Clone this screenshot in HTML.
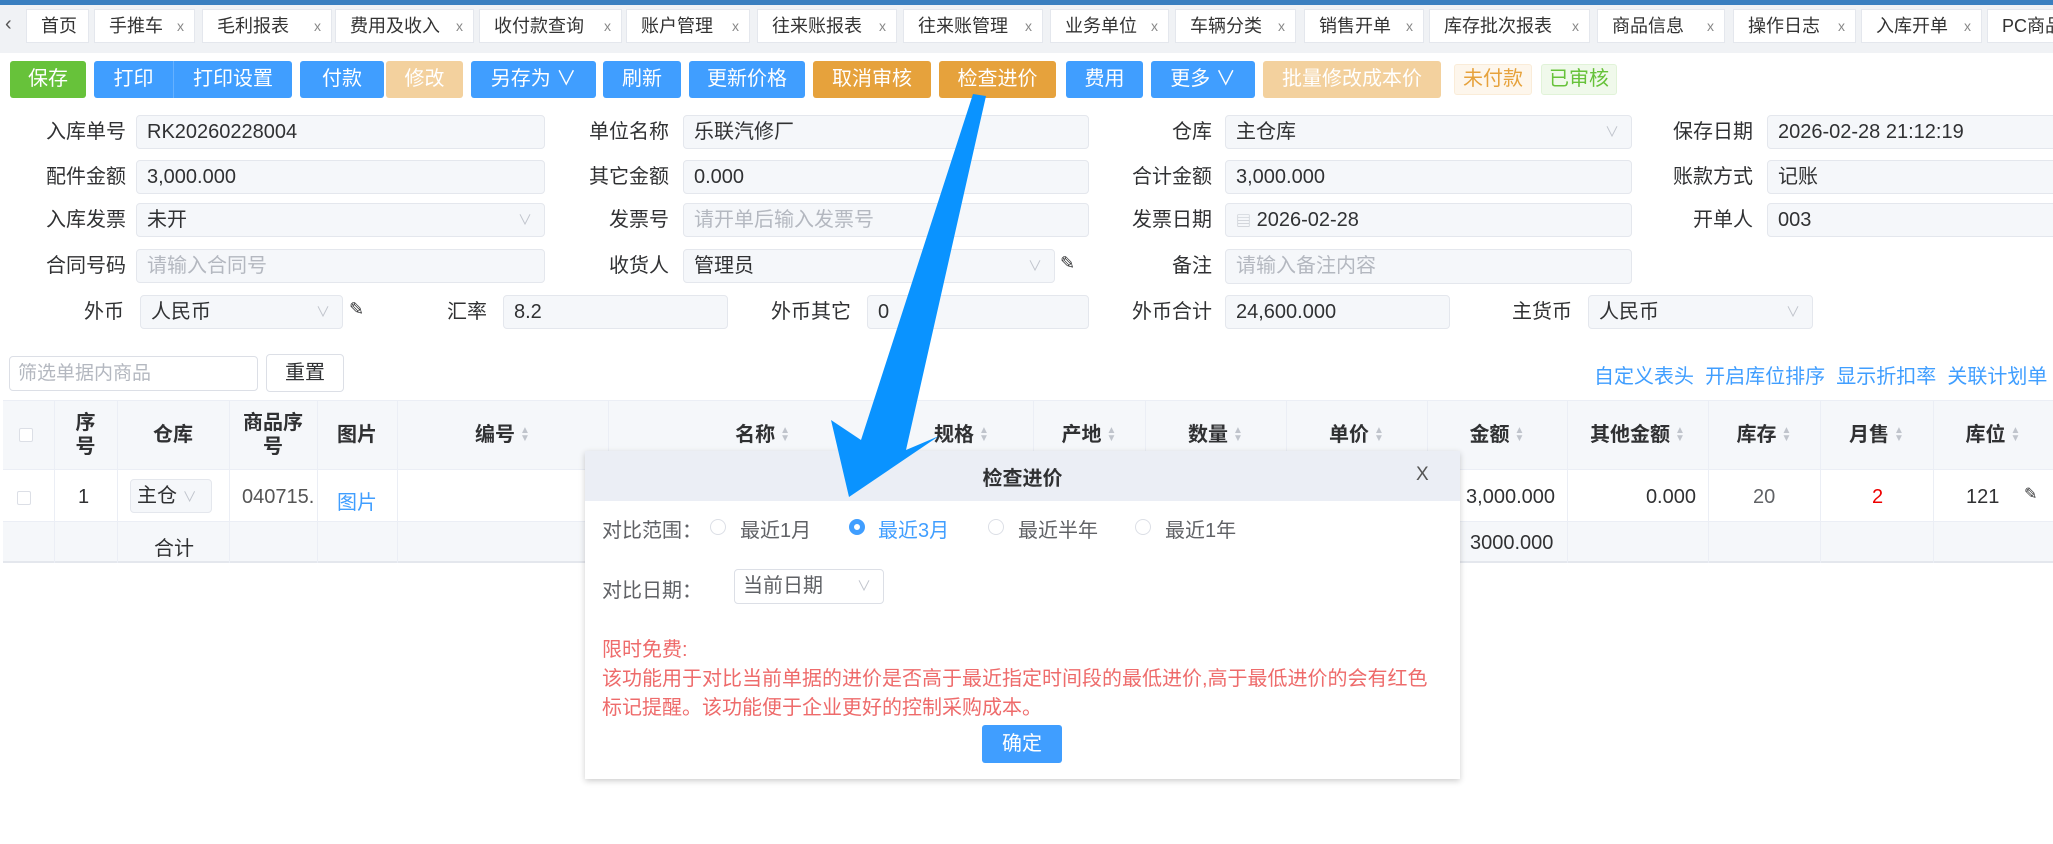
<!DOCTYPE html>
<html><head><meta charset="utf-8"><style>
*{box-sizing:border-box;margin:0;padding:0}
body{width:2053px;height:844px;overflow:hidden;background:#fff;position:relative;font-family:"Liberation Sans","Noto Sans CJK SC",sans-serif;color:#303133;font-size:20px}
.a{position:absolute}
.tab{position:absolute;top:9px;height:34px;background:#fff;border:1px solid #e4e7ed;font-size:18px;line-height:32px;padding-left:14px;color:#333}
.tab i{position:absolute;right:10px;top:0;font-style:normal;font-size:14px;color:#888}
.btn{position:absolute;top:61px;height:37px;border-radius:3px;color:#fff;font-size:20px;line-height:37px;text-align:center}
.bl{background:#409eff}.or{background:#e6a23c}.lo{background:#f3d19e}.gr{background:#67c23a}
.lab{position:absolute;text-align:right;font-size:20px;height:34px;line-height:34px}
.in{position:absolute;height:34px;background:#f5f7fa;border:1px solid #e4e7ed;border-radius:4px;font-size:20px;line-height:32px;padding-left:10px;color:#303133}
.ph{color:#b4b8c0}
.ar{position:absolute;right:12px;top:0;color:#c0c4cc;font-size:14px}
.th{position:absolute;top:400px;height:69px;font-weight:bold;font-size:20px;display:flex;align-items:center;justify-content:center;text-align:center;line-height:24px}
.s{color:#c0c4cc;font-size:10px;line-height:8px;display:inline-block;margin-left:5px;vertical-align:middle}
.vl{position:absolute;top:400px;height:163px;width:1px;background:#ebeef5}
.td{position:absolute;font-size:20px}
.rad{position:absolute;width:16px;height:16px;border:1px solid #dcdfe6;border-radius:50%;top:519px}
</style></head><body>
<div class="a" style="left:0;top:0;width:2053px;height:5px;background:#3a7fc0"></div>
<div class="a" style="left:0;top:5px;width:2053px;height:48px;background:#f0f2f5"></div>
<div class="a" style="left:5px;top:13px;font-size:20px;color:#555">‹</div>
<div class="tab" style="left:26px;width:63px">首页</div>
<div class="tab" style="left:94px;width:101px">手推车<i>x</i></div>
<div class="tab" style="left:202px;width:130px">毛利报表<i>x</i></div>
<div class="tab" style="left:335px;width:139px">费用及收入<i>x</i></div>
<div class="tab" style="left:479px;width:143px">收付款查询<i>x</i></div>
<div class="tab" style="left:626px;width:124px">账户管理<i>x</i></div>
<div class="tab" style="left:757px;width:140px">往来账报表<i>x</i></div>
<div class="tab" style="left:903px;width:140px">往来账管理<i>x</i></div>
<div class="tab" style="left:1050px;width:119px">业务单位<i>x</i></div>
<div class="tab" style="left:1175px;width:121px">车辆分类<i>x</i></div>
<div class="tab" style="left:1304px;width:120px">销售开单<i>x</i></div>
<div class="tab" style="left:1429px;width:161px">库存批次报表<i>x</i></div>
<div class="tab" style="left:1597px;width:128px">商品信息<i>x</i></div>
<div class="tab" style="left:1733px;width:123px">操作日志<i>x</i></div>
<div class="tab" style="left:1861px;width:121px">入库开单<i>x</i></div>
<div class="tab" style="left:1987px;width:80px">PC商品</div>

<div class="btn gr" style="left:10px;width:76px">保存</div>
<div class="btn bl" style="left:94px;width:198px"><span style="position:absolute;left:0;width:79px">打印</span><span style="position:absolute;left:79px;top:0;width:1px;height:37px;background:#66b1ff"></span><span style="position:absolute;left:80px;width:118px">打印设置</span></div>
<div class="btn bl" style="left:300px;width:84px">付款</div>
<div class="btn lo" style="left:386px;width:77px">修改</div>
<div class="btn bl" style="left:471px;width:125px">另存为 ∨</div>
<div class="btn bl" style="left:603px;width:78px">刷新</div>
<div class="btn bl" style="left:689px;width:116px">更新价格</div>
<div class="btn or" style="left:813px;width:118px">取消审核</div>
<div class="btn or" style="left:939px;width:117px">检查进价</div>
<div class="btn bl" style="left:1066px;width:77px">费用</div>
<div class="btn bl" style="left:1151px;width:104px">更多 ∨</div>
<div class="btn lo" style="left:1263px;width:178px">批量修改成本价</div>
<div class="btn" style="left:1454px;top:64px;height:31px;line-height:29px;width:78px;background:#fdf6ec;border:1px solid #faecd8;color:#e6a23c">未付款</div>
<div class="btn" style="left:1541px;top:64px;height:31px;line-height:29px;width:76px;background:#f0f9eb;border:1px solid #e1f3d8;color:#67c23a">已审核</div>

<div class="lab" style="left:20px;width:106px;top:115px">入库单号</div><div class="in" style="left:136px;width:409px;top:115px">RK20260228004</div>
<div class="lab" style="left:560px;width:109px;top:115px">单位名称</div><div class="in" style="left:683px;width:406px;top:115px">乐联汽修厂</div>
<div class="lab" style="left:1100px;width:112px;top:115px">仓库</div><div class="in" style="left:1225px;width:407px;top:115px">主仓库<span class="ar">∨</span></div>
<div class="lab" style="left:1640px;width:113px;top:115px">保存日期</div><div class="in" style="left:1767px;width:300px;top:115px">2026-02-28 21:12:19</div>

<div class="lab" style="left:20px;width:106px;top:160px">配件金额</div><div class="in" style="left:136px;width:409px;top:160px">3,000.000</div>
<div class="lab" style="left:560px;width:109px;top:160px">其它金额</div><div class="in" style="left:683px;width:406px;top:160px">0.000</div>
<div class="lab" style="left:1100px;width:112px;top:160px">合计金额</div><div class="in" style="left:1225px;width:407px;top:160px">3,000.000</div>
<div class="lab" style="left:1640px;width:113px;top:160px">账款方式</div><div class="in" style="left:1767px;width:300px;top:160px">记账</div>

<div class="lab" style="left:20px;width:106px;top:203px">入库发票</div><div class="in" style="left:136px;width:409px;top:203px">未开<span class="ar">∨</span></div>
<div class="lab" style="left:560px;width:109px;top:203px">发票号</div><div class="in ph" style="left:683px;width:406px;top:203px">请开单后输入发票号</div>
<div class="lab" style="left:1100px;width:112px;top:203px">发票日期</div><div class="in" style="left:1225px;width:407px;top:203px"><span style="color:#c0c4cc;font-size:15px">▤</span> 2026-02-28</div>
<div class="lab" style="left:1640px;width:113px;top:203px">开单人</div><div class="in" style="left:1767px;width:300px;top:203px">003</div>

<div class="lab" style="left:20px;width:106px;top:249px">合同号码</div><div class="in ph" style="left:136px;width:409px;top:249px">请输入合同号</div>
<div class="lab" style="left:560px;width:109px;top:249px">收货人</div><div class="in" style="left:683px;width:372px;top:249px">管理员<span class="ar">∨</span></div><div class="a" style="left:1060px;top:253px;font-size:18px">✎</div>
<div class="lab" style="left:1100px;width:112px;top:249px">备注</div><div class="in ph" style="left:1225px;width:407px;top:249px;height:35px">请输入备注内容</div>

<div class="lab" style="left:20px;width:104px;top:295px">外币</div><div class="in" style="left:140px;width:203px;top:295px">人民币<span class="ar">∨</span></div><div class="a" style="left:349px;top:299px;font-size:18px">✎</div>
<div class="lab" style="left:400px;width:87px;top:295px">汇率</div><div class="in" style="left:503px;width:225px;top:295px">8.2</div>
<div class="lab" style="left:740px;width:111px;top:295px">外币其它</div><div class="in" style="left:867px;width:222px;top:295px">0</div>
<div class="lab" style="left:1100px;width:112px;top:295px">外币合计</div><div class="in" style="left:1225px;width:225px;top:295px">24,600.000</div>
<div class="lab" style="left:1460px;width:112px;top:295px">主货币</div><div class="in" style="left:1588px;width:225px;top:295px">人民币<span class="ar">∨</span></div>

<div class="a" style="left:9px;top:356px;width:249px;height:35px;border:1px solid #dcdfe6;border-radius:4px;line-height:33px;padding-left:8px;color:#b4b8c0;font-size:19px">筛选单据内商品</div>
<div class="a" style="left:266px;top:354px;width:78px;height:38px;border:1px solid #dcdfe6;border-radius:4px;line-height:36px;text-align:center;font-size:20px">重置</div>
<div class="a" style="left:1594px;top:360px;color:#409eff;font-size:20px;white-space:nowrap">自定义表头&nbsp; 开启库位排序&nbsp; 显示折扣率&nbsp; 关联计划单</div>

<div class="a" style="left:3px;top:400px;width:2050px;height:69px;background:#f5f7fa;border-top:1px solid #ebeef5"></div>
<div class="a" style="left:3px;top:469px;width:2050px;height:1px;background:#ebeef5"></div>
<div class="a" style="left:3px;top:521px;width:2050px;height:42px;background:#f5f7fa;border-top:1px solid #ebeef5;border-bottom:2px solid #e4e7ed"></div>
<div class="vl" style="left:54px"></div><div class="vl" style="left:117px"></div><div class="vl" style="left:229px"></div><div class="vl" style="left:317px"></div><div class="vl" style="left:397px"></div><div class="vl" style="left:608px"></div><div class="vl" style="left:890px"></div><div class="vl" style="left:1033px"></div><div class="vl" style="left:1145px"></div><div class="vl" style="left:1286px"></div><div class="vl" style="left:1427px"></div><div class="vl" style="left:1567px"></div><div class="vl" style="left:1708px"></div><div class="vl" style="left:1820px"></div><div class="vl" style="left:1933px"></div>
<div class="a" style="left:19px;top:428px;width:14px;height:14px;border:1px solid #dcdfe6;border-radius:2px;background:#fff"></div>
<div class="th" style="left:54px;width:63px">序<br>号</div>
<div class="th" style="left:117px;width:112px">仓库</div>
<div class="th" style="left:229px;width:88px">商品序<br>号</div>
<div class="th" style="left:317px;width:80px">图片</div>
<div class="th" style="left:397px;width:211px">编号<span class="s">▲<br>▼</span></div>
<div class="th" style="left:608px;width:282px;justify-content:flex-end;padding-right:100px">名称<span class="s">▲<br>▼</span></div>
<div class="th" style="left:890px;width:143px">规格<span class="s">▲<br>▼</span></div>
<div class="th" style="left:1033px;width:112px">产地<span class="s">▲<br>▼</span></div>
<div class="th" style="left:1145px;width:141px">数量<span class="s">▲<br>▼</span></div>
<div class="th" style="left:1286px;width:141px">单价<span class="s">▲<br>▼</span></div>
<div class="th" style="left:1427px;width:140px">金额<span class="s">▲<br>▼</span></div>
<div class="th" style="left:1567px;width:141px">其他金额<span class="s">▲<br>▼</span></div>
<div class="th" style="left:1708px;width:112px">库存<span class="s">▲<br>▼</span></div>
<div class="th" style="left:1820px;width:113px">月售<span class="s">▲<br>▼</span></div>
<div class="th" style="left:1933px;width:120px">库位<span class="s">▲<br>▼</span></div>

<div class="a" style="left:17px;top:491px;width:14px;height:14px;border:1px solid #dcdfe6;border-radius:2px"></div>
<div class="td" style="left:78px;top:486px">1</div>
<div class="a" style="left:130px;top:479px;width:82px;height:34px;background:#f5f7fa;border:1px solid #e4e7ed;border-radius:4px;padding-left:6px;line-height:32px;font-size:20px;overflow:hidden;white-space:nowrap">主仓 <span style="color:#c0c4cc;font-size:14px">∨</span></div>
<div class="td" style="left:242px;top:486px;color:#555;width:74px;overflow:hidden;white-space:nowrap">040715.</div>
<div class="td" style="left:337px;top:486px;color:#409eff">图片</div>
<div class="td" style="left:1455px;top:486px;width:100px;text-align:right">3,000.000</div>
<div class="td" style="left:1596px;top:486px;width:100px;text-align:right">0.000</div>
<div class="td" style="left:1753px;top:486px;color:#606266">20</div>
<div class="td" style="left:1872px;top:486px;color:#e00">2</div>
<div class="td" style="left:1966px;top:486px">121</div>
<div class="td" style="left:2024px;top:484px;font-size:16px">✎</div>
<div class="td" style="left:154px;top:532px">合计</div>
<div class="td" style="left:1470px;top:532px">3000.000</div>

<div class="a" style="left:585px;top:451px;width:875px;height:328px;background:#fff;box-shadow:0 2px 6px rgba(0,0,0,.2)"></div>
<div class="a" style="left:585px;top:451px;width:875px;height:50px;background:#ebeef5"></div>
<div class="a" style="left:585px;top:462px;width:875px;text-align:center;font-weight:bold;font-size:20px">检查进价</div>
<div class="a" style="left:1416px;top:464px;font-size:19px;color:#555">X</div>
<div class="a" style="left:602px;top:514px;color:#606266">对比范围：</div>
<div class="rad" style="left:710px"></div><div class="a" style="left:740px;top:514px;color:#606266">最近1月</div>
<div class="rad" style="left:849px;border:5px solid #409eff;background:#fff"></div><div class="a" style="left:878px;top:514px;color:#409eff">最近3月</div>
<div class="rad" style="left:988px"></div><div class="a" style="left:1018px;top:514px;color:#606266">最近半年</div>
<div class="rad" style="left:1135px"></div><div class="a" style="left:1165px;top:514px;color:#606266">最近1年</div>
<div class="a" style="left:602px;top:574px;color:#606266">对比日期：</div>
<div class="a" style="left:734px;top:569px;width:150px;height:35px;border:1px solid #dcdfe6;border-radius:4px;padding-left:8px;line-height:33px;color:#606266">当前日期<span style="position:absolute;right:12px;color:#c0c4cc;font-size:14px">∨</span></div>
<div class="a" style="left:602px;top:636px;color:#ee6b6b;font-size:20px;line-height:29px;width:850px">限时免费:<br>该功能用于对比当前单据的进价是否高于最近指定时间段的最低进价,高于最低进价的会有红色<br>标记提醒。该功能便于企业更好的控制采购成本。</div>
<div class="a" style="left:982px;top:725px;width:80px;height:38px;background:#409eff;border-radius:3px;color:#fff;text-align:center;line-height:38px">确定</div>

<svg class="a" style="left:0;top:0" width="2053" height="844"><polygon points="973,94 986,96 906,450 939,436 849,497 831,420 861,440" fill="#0a93ff"/></svg>
</body></html>
